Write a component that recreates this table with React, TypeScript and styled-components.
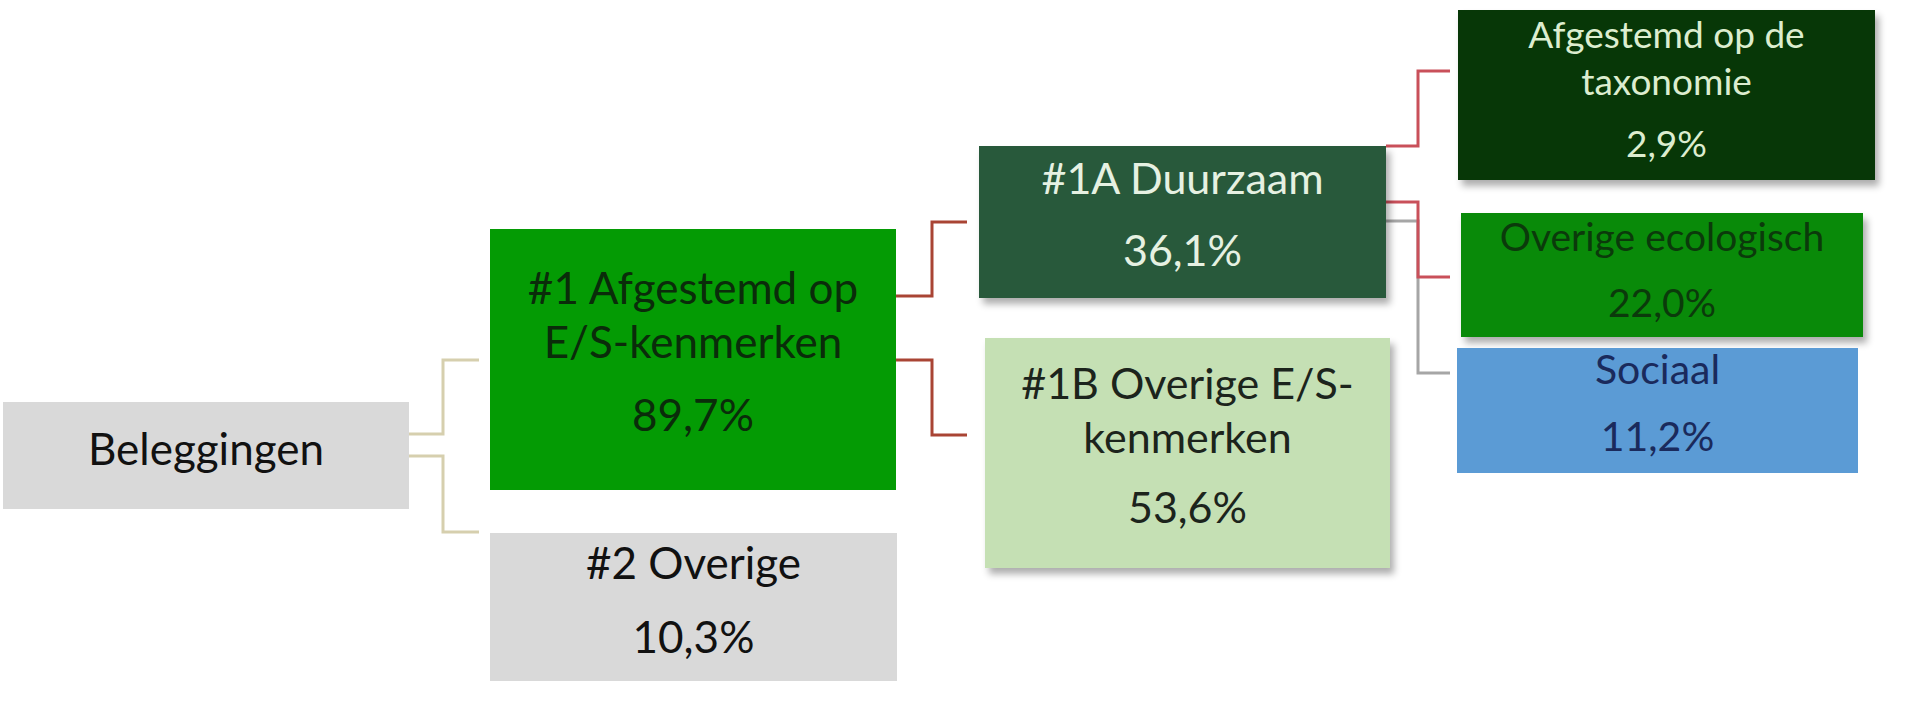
import styled, { createGlobalStyle } from "styled-components";

const GlobalStyle = createGlobalStyle`
  html, body {
    margin: 0;
    padding: 0;
    background: #ffffff;
  }
  body {
    font-family: Lato, "Open Sans", sans-serif;
  }
`;

type NodeData = {
  key: string;
  x: number;
  y: number;
  w: number;
  h: number;
  bg: string;
  fg: string;
  size: number;
  lh: number;
  gap: number;
  pb: number;
  shadow?: boolean;
  lines: string[];
  value?: string;
};

const nodes: NodeData[] = [
  { key: "beleg", x: 3, y: 402, w: 406, h: 107, bg: "#d9d9d9", fg: "#111111", size: 44, lh: 54, gap: 18, pb: 16, lines: ["Beleggingen"] },
  { key: "n1", x: 490, y: 229, w: 406, h: 261, bg: "#049b04", fg: "#0a2c0a", size: 44, lh: 54, gap: 19, pb: 18, lines: ["#1 Afgestemd op", "E/S-kenmerken"], value: "89,7%" },
  { key: "n2", x: 490, y: 533, w: 407, h: 148, bg: "#d9d9d9", fg: "#111111", size: 44, lh: 54, gap: 20, pb: 16, lines: ["#2 Overige"], value: "10,3%" },
  { key: "n1a", x: 979, y: 146, w: 407, h: 152, bg: "#28593b", fg: "#e6f1e2", size: 43, lh: 54, gap: 18, pb: 16, shadow: true, lines: ["#1A Duurzaam"], value: "36,1%" },
  { key: "n1b", x: 985, y: 338, w: 405, h: 230, bg: "#c5e0b4", fg: "#1c241c", size: 43, lh: 54, gap: 16, pb: 16, shadow: true, lines: ["#1B Overige E/S-", "kenmerken"], value: "53,6%" },
  { key: "tax", x: 1458, y: 10, w: 417, h: 170, bg: "#073707", fg: "#dcedcf", size: 37, lh: 47, gap: 15, pb: 15, shadow: true, lines: ["Afgestemd op de", "taxonomie"], value: "2,9%" },
  { key: "eco", x: 1461, y: 213, w: 402, h: 124, bg: "#098a09", fg: "#0b3a0b", size: 39, lh: 47, gap: 19, pb: 12, shadow: true, lines: ["Overige ecologisch"], value: "22,0%" },
  { key: "soc", x: 1457, y: 348, w: 401, h: 125, bg: "#5b9bd5", fg: "#1a2a5c", size: 41, lh: 47, gap: 20, pb: 18, lines: ["Sociaal"], value: "11,2%" },
];

type Link = { points: string; color: string };

const links: Link[] = [
  { points: "409,434 443,434 443,360 479,360", color: "#d6cfae" },
  { points: "409,456 443,456 443,532 479,532", color: "#d6cfae" },
  { points: "896,296 932,296 932,222 967,222", color: "#a94434" },
  { points: "896,360 932,360 932,435 967,435", color: "#a94434" },
  { points: "1386,221 1418,221 1418,373 1450,373", color: "#a6a6a6" },
  { points: "1386,146 1418,146 1418,71 1450,71", color: "#c9505a" },
  { points: "1386,202 1418,202 1418,277 1450,277", color: "#c9505a" },
];

function App() {
  return (
    <>
      <GlobalStyle />
      <Canvas>
        <Connectors width={1920} height={703} viewBox="0 0 1920 703">
          {links.map((l, i) => (
            <polyline
              key={i}
              points={l.points}
              fill="none"
              stroke={l.color}
              strokeWidth={3}
            />
          ))}
        </Connectors>
        {nodes.map((n) => (
          <Node
            key={n.key}
            $x={n.x}
            $y={n.y}
            $w={n.w}
            $h={n.h}
            $bg={n.bg}
            $fg={n.fg}
            $size={n.size}
            $lh={n.lh}
            $pb={n.pb}
            $shadow={!!n.shadow}
          >
            <Title>
              {n.lines.map((line) => (
                <Line key={line}>{line}</Line>
              ))}
            </Title>
            {n.value && <Value $gap={n.gap}>{n.value}</Value>}
          </Node>
        ))}
      </Canvas>
    </>
  );
}

export default App;

const Canvas = styled.div`
  position: relative;
  width: 1920px;
  height: 703px;
  background: #ffffff;
  overflow: hidden;
`;

const Connectors = styled.svg`
  position: absolute;
  left: 0;
  top: 0;
`;

const Node = styled.div<{
  $x: number;
  $y: number;
  $w: number;
  $h: number;
  $bg: string;
  $fg: string;
  $size: number;
  $lh: number;
  $pb: number;
  $shadow: boolean;
}>`
  position: absolute;
  left: ${(p) => p.$x}px;
  top: ${(p) => p.$y}px;
  width: ${(p) => p.$w}px;
  height: ${(p) => p.$h}px;
  box-sizing: border-box;
  padding-bottom: ${(p) => p.$pb}px;
  display: flex;
  flex-direction: column;
  justify-content: center;
  align-items: center;
  background: ${(p) => p.$bg};
  color: ${(p) => p.$fg};
  font-size: ${(p) => p.$size}px;
  line-height: ${(p) => p.$lh}px;
  text-align: center;
  box-shadow: ${(p) =>
    p.$shadow ? "4px 6px 7px rgba(0, 0, 0, 0.32)" : "none"};
`;

const Title = styled.div`
  display: flex;
  flex-direction: column;
  align-items: center;
`;

const Line = styled.span`
  white-space: nowrap;
`;

const Value = styled.div<{ $gap: number }>`
  margin-top: ${(p) => p.$gap}px;
  white-space: nowrap;
`;
